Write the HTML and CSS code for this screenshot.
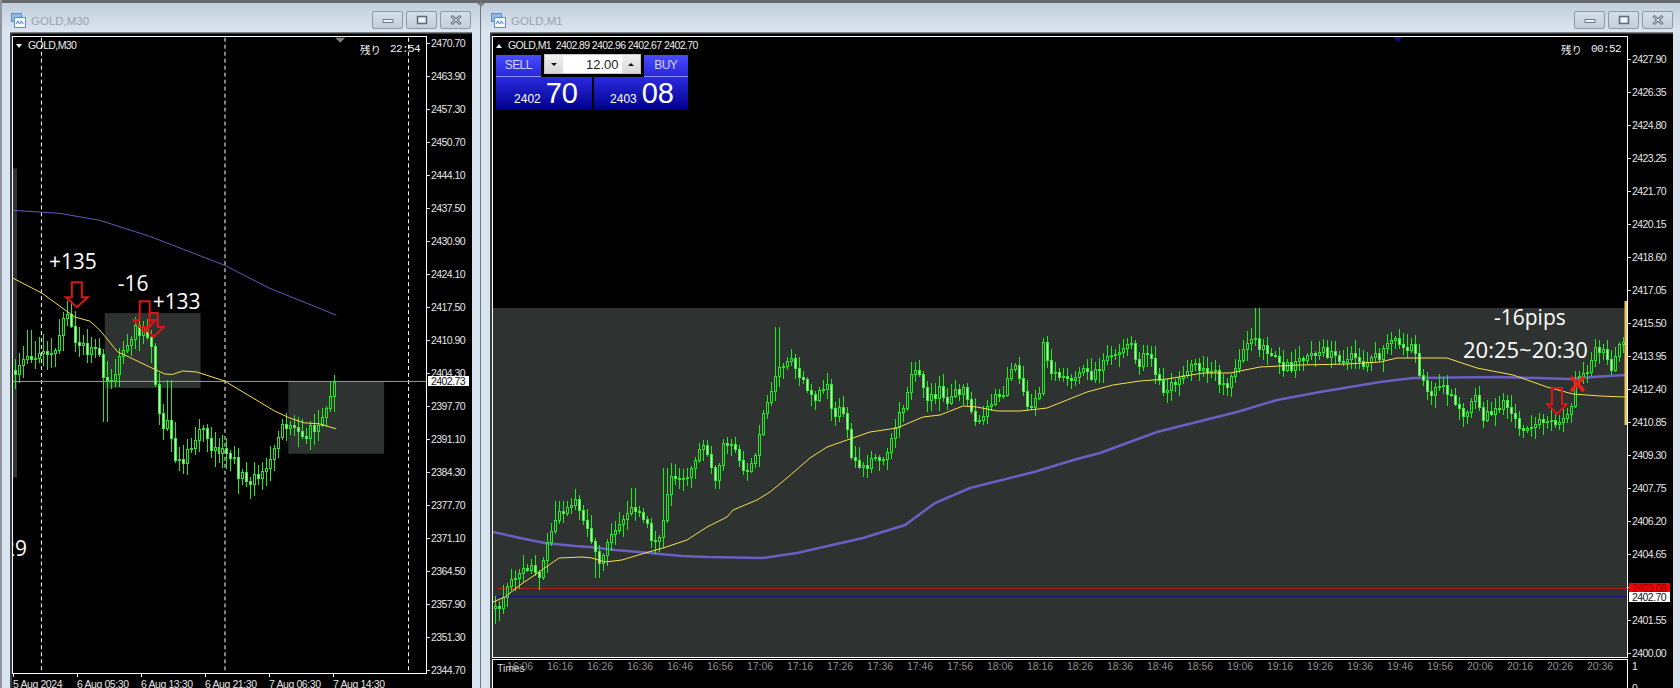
FILE: index.html
```html
<!DOCTYPE html>
<html lang="ja">
<head>
<meta charset="utf-8">
<title>GOLD charts</title>
<link rel="stylesheet" href="styles.css">
</head>
<body>
<section class="win win-left">
  <header class="title">
    <svg class="win-icon" viewBox="0 0 15 15"><rect x="0.5" y="0.5" width="10" height="8" fill="#8db8e4" stroke="#5c8fc6"/><rect x="3.5" y="4.5" width="11" height="10" fill="#f4f8fc" stroke="#5c8fc6"/><path d="M5 11l2-3 1.500 3 2-3 1.500 3" fill="none" stroke="#4a7fb8"/></svg>
    <span class="title-text">GOLD,M30</span>
    <div class="btns">
      <button class="btn"><svg viewBox="0 0 12 8"><rect x="1" y="3.500" width="10" height="3" fill="#eef2f6" stroke="#6e7b88"/></svg></button>
      <button class="btn"><svg viewBox="0 0 12 10"><rect x="1.500" y="1.500" width="9" height="7" fill="#e6ecf2" stroke="#5e6b78" stroke-width="1.500"/><rect x="4" y="4" width="4" height="2" fill="#fff"/></svg></button>
      <button class="btn"><svg viewBox="0 0 12 10"><path d="M1.500 1L10.500 9M10.500 1L1.500 9" stroke="#5e6b78" stroke-width="3"/><path d="M2 1.500L10 8.500M10 1.500L2 8.500" stroke="#f2f5f8" stroke-width="1"/></svg></button>
    </div>
  </header>
  <div class="client">
    <div class="plot-col">
      <div class="chart">
        <svg class="canvas" viewBox="13 37 414 636">
          <rect class="zone" x="13" y="168" width="4" height="310"/>
          <rect class="zone" x="105" y="313" width="96" height="75"/>
          <rect class="zone" x="289" y="382" width="96" height="72"/>
          <path class="dash" d="M41.500 37V673M225.500 37V673M409.500 37V673"/>
          <path class="price-line" d="M13 381.500H427"/>
          <polygon class="nav-gray" points="336,37 346,37 341,42"/>
          <polyline class="ma-thin-blue" points="13,210 60,213 100,220 150,236 225,265 270,288 337,315"/>
          <g id="candles-left"></g>
          <polyline class="ma-yellow" points="13,278 42,293 75,317 90,321 100,330 118,352 125,355 150,367 165,374 173,374.500 183,371 197,372 225,381 260,402 275,411 290,418 305,423 320,424 337,429"/>
          <path class="arrow" d="M72 282H82V297H88L77 307L66 297H72Z"/>
          <path class="arrow" d="M140 301H150V320H156L145 332L134 320H140Z"/>
          <path class="arrow" d="M150 313H158V327H164L154 337L144 327H150Z"/>
          <text class="note" x="49" y="269">+135</text>
          <text class="note" x="118" y="291">-16</text>
          <text class="note" x="153" y="309">+133</text>
          <text class="note" x="3" y="557">29</text>
        </svg>
        <div class="chart-head"><i class="tri tri-down"></i><span>GOLD,M30</span></div>
        <div class="remain"><span class="remain-jp">残り</span><span class="remain-time">22:54</span></div>
      </div>
      <div class="time-axis time-left">
        <span>5 Aug 2024</span><span>6 Aug 05:30</span><span>6 Aug 13:30</span><span>6 Aug 21:30</span><span>7 Aug 06:30</span><span>7 Aug 14:30</span>
      </div>
    </div>
    <div class="axis axis-left">
      <span>2470.70</span><span>2463.90</span><span>2457.30</span><span>2450.70</span><span>2444.10</span><span>2437.50</span><span>2430.90</span><span>2424.10</span><span>2417.50</span><span>2410.90</span><span>2404.30</span><span>2397.70</span><span>2391.10</span><span>2384.30</span><span>2377.70</span><span>2371.10</span><span>2364.50</span><span>2357.90</span><span>2351.30</span><span>2344.70</span>
      <b class="tag tag-white tag-left">2402.73</b>
    </div>
  </div>
</section>

<section class="win win-right">
  <header class="title">
    <svg class="win-icon" viewBox="0 0 15 15"><rect x="0.5" y="0.5" width="10" height="8" fill="#8db8e4" stroke="#5c8fc6"/><rect x="3.5" y="4.5" width="11" height="10" fill="#f4f8fc" stroke="#5c8fc6"/><path d="M5 11l2-3 1.500 3 2-3 1.500 3" fill="none" stroke="#4a7fb8"/></svg>
    <span class="title-text">GOLD,M1</span>
    <div class="btns">
      <button class="btn"><svg viewBox="0 0 12 8"><rect x="1" y="3.500" width="10" height="3" fill="#eef2f6" stroke="#6e7b88"/></svg></button>
      <button class="btn"><svg viewBox="0 0 12 10"><rect x="1.500" y="1.500" width="9" height="7" fill="#e6ecf2" stroke="#5e6b78" stroke-width="1.500"/><rect x="4" y="4" width="4" height="2" fill="#fff"/></svg></button>
      <button class="btn"><svg viewBox="0 0 12 10"><path d="M1.500 1L10.500 9M10.500 1L1.500 9" stroke="#5e6b78" stroke-width="3"/><path d="M2 1.500L10 8.500M10 1.500L2 8.500" stroke="#f2f5f8" stroke-width="1"/></svg></button>
    </div>
  </header>
  <div class="client">
    <div class="plot-col">
      <div class="chart">
        <svg class="canvas" viewBox="493 37 1134 620">
          <rect class="zone" x="493" y="308" width="1134" height="349"/>
          <polygon class="nav-blue" points="1393,37 1403,37 1398,42"/>
          <path class="level-red" d="M497 588.500H1627"/>
          <path class="level-blue" d="M497 596.500H1627"/>
          <polyline class="ma-thick-blue" points="493,532 520,538 545,543 575,546 590,547 615,550 639,552 682,556 707,557 763,558 797,553 863,538 905,525 935,503 970,488 1034,472 1077,459 1100,453 1157,432 1237,412 1277,400 1320,392 1380,382 1413,378 1497,377 1537,378 1570,379 1593,377 1625,375"/>
          <g id="candles-right"></g>
          <polyline class="ma-yellow" points="493,602 505,597 520,585 542,570 559,558 582,557 592,558 605,562 622,560 645,553 663,548 687,540 707,527 727,517 733,510 757,500 770,492 787,478 810,458 827,447 847,440 870,432 897,428 923,417 940,415 963,406 977,407 997,411 1020,411 1047,408 1087,392 1113,385 1140,381 1167,379 1203,373 1230,373 1260,367 1300,365 1347,364 1380,362 1397,358 1447,358 1477,368 1513,375 1547,387 1573,394 1600,396 1625,397"/>
          <path class="arrow" d="M1552 388H1562V404H1567L1557 414L1547 404H1552Z"/>
          <path class="cross" d="M1571 377Q1578 384 1584 391M1584 377Q1577 384 1571 391"/>
          <path class="bar-yellow" d="M1626 301V425"/>
          <text class="note" x="1494" y="325">-16pips</text>
          <text class="note note-wide" x="1463" y="358">20:25~20:30</text>
        </svg>
        <div class="chart-head"><i class="tri tri-up"></i><span>GOLD,M1&nbsp; 2402.89 2402.96 2402.67 2402.70</span></div>
        <div class="remain"><span class="remain-jp">残り</span><span class="remain-time">00:52</span></div>
        <div class="trade">
          <div class="trade-top">
            <div class="side"><span>SELL</span></div>
            <div class="spin"><i class="spin-btn"><i class="tri-sm tri-sm-down"></i></i><span class="spin-val">12.00</span><i class="spin-btn"><i class="tri-sm tri-sm-up"></i></i></div>
            <div class="side"><span>BUY</span></div>
          </div>
          <div class="trade-bottom">
            <div class="quote quote-sell"><small>2402</small><strong>70</strong></div>
            <div class="quote quote-buy"><small>2403</small><strong>08</strong></div>
          </div>
        </div>
      </div>
      <div class="sub">
        <span class="sub-name">Times</span>
        <span>16:06</span><span>16:16</span><span>16:26</span><span>16:36</span><span>16:46</span><span>16:56</span><span>17:06</span><span>17:16</span><span>17:26</span><span>17:36</span><span>17:46</span><span>17:56</span><span>18:06</span><span>18:16</span><span>18:26</span><span>18:36</span><span>18:46</span><span>18:56</span><span>19:06</span><span>19:16</span><span>19:26</span><span>19:36</span><span>19:46</span><span>19:56</span><span>20:06</span><span>20:16</span><span>20:26</span><span>20:36</span>
      </div>
    </div>
    <div class="axis axis-right">
      <span>2427.90</span><span>2426.35</span><span>2424.80</span><span>2423.25</span><span>2421.70</span><span>2420.15</span><span>2418.60</span><span>2417.05</span><span>2415.50</span><span>2413.95</span><span>2412.40</span><span>2410.85</span><span>2409.30</span><span>2407.75</span><span>2406.20</span><span>2404.65</span><span>2403.10</span><span>2401.55</span><span>2400.00</span>
      <b class="tag tag-red">2403.08</b>
      <b class="tag tag-white tag-right">2402.70</b>
      <em class="sub-scale sub-scale-top">1</em>
      <em class="sub-scale sub-scale-bottom">0</em>
    </div>
  </div>
</section>
<script src="script.js"></script>
</body>
</html>
```

FILE: styles.css
```css
* { box-sizing: border-box; }
html, body { margin: 0; height: 688px; overflow: hidden; }
body {
  display: flex;
  background: #d8e3ef;
  font-family: "Liberation Sans", Arial, sans-serif;
}
.win {
  display: flex;
  flex-direction: column;
  height: 688px;
  background: #d8e4f0;
}
.win-left {
  width: 481px;
  padding-left: 8px;
  padding-right: 8px;
  border-left: 2px solid #8f959b;
  border-right: 1px solid #6f767d;
}
.win-right {
  position: relative;
  flex: 1;
  padding-left: 9px;
  padding-right: 7px;
}
.win-right::before {
  content: "";
  position: absolute;
  top: 3px;
  left: -4px;
  width: 0;
  height: 0;
  border-left: 4px solid transparent;
  border-right: 4px solid transparent;
  border-top: 4px solid #7d8287;
}
.title {
  flex: none;
  display: flex;
  align-items: flex-start;
  height: 33px;
  margin: 0 -9px 0 -9px;
  padding: 10px 9px 0 10px;
  border-top: 3px solid #65696d;
  background: linear-gradient(#c2ced9, #dbe6f2);
}
.win-left .title { margin: 0 -8px; padding-left: 9px; }
.win-right .title { margin: 0 -7px 0 -9px; padding-right: 7px; }
.win-icon { width: 15px; height: 15px; }
.title-text {
  margin-left: 5px;
  font-size: 11.500px;
  line-height: 16px;
  color: #98a2ac;
}
.btns { display: flex; gap: 3px; margin-left: auto; margin-top: -2px; }
.btn {
  display: flex;
  align-items: center;
  justify-content: center;
  width: 31px;
  height: 18px;
  padding: 0;
  border: 1px solid #8c9aa8;
  border-radius: 2px;
  background: linear-gradient(#d5dfe9, #c2cedb);
}
.btn svg { width: 12px; height: 10px; }
.client {
  flex: 1;
  display: flex;
  min-height: 0;
  padding: 3px 0 0 2px;
  background: #000;
  box-shadow: inset 2px 1px 0 #3a3d40, 0 -1px 0 #7a7f84;
}
.plot-col { display: flex; flex-direction: column; flex: 1; min-width: 0; }
.chart {
  position: relative;
  flex: 1;
  min-height: 0;
  border: 1px solid #fff;
  background: #000;
}
.canvas { display: block; width: 100%; height: 100%; }
.zone { fill: #2e3230; }
.dash { stroke: #fff; stroke-width: 1; stroke-dasharray: 4 3; fill: none; }
.price-line { stroke: #9b9e9e; stroke-width: 1; }
.nav-gray { fill: #808080; }
.nav-blue { fill: #10108c; }
.ma-thin-blue { fill: none; stroke: #5f5bbc; stroke-width: 1; }
.ma-thick-blue { fill: none; stroke: #6a60c4; stroke-width: 2.500; }
.ma-yellow { fill: none; stroke: #f5e050; stroke-width: 1; }
.level-red { stroke: #b41c1c; stroke-width: 1; }
.level-blue { stroke: #12127e; stroke-width: 1; }
.wick { stroke: #22ea22; stroke-width: 1; shape-rendering: crispEdges; }
.body-up { fill: none; stroke: #22ea22; stroke-width: 1; shape-rendering: crispEdges; }
.body-down { fill: #ccfcc8; stroke: #34f034; stroke-width: 1; shape-rendering: crispEdges; }
.arrow { fill: none; stroke: #dc1414; stroke-width: 2; }
.cross { fill: none; stroke: #f01c1c; stroke-width: 3.500; }
.bar-yellow { stroke: #f0c850; stroke-width: 3; }
.note {
  font-family: "Open Sans", "Liberation Sans", sans-serif;
  font-size: 21px;
  fill: #fff;
}
.note-wide { font-size: 22px; }
.chart-head {
  position: absolute;
  top: 2px;
  left: 3px;
  display: flex;
  align-items: center;
  gap: 6px;
  font-size: 10.500px;
  line-height: 13px;
  letter-spacing: -0.6px;
  color: #eee;
}
.tri { display: block; width: 0; height: 0; border-left: 3.500px solid transparent; border-right: 3.500px solid transparent; }
.tri-down { border-top: 4px solid #eee; }
.tri-up { border-bottom: 4px solid #eee; }
.remain {
  position: absolute;
  top: 6px;
  right: 6px;
  display: flex;
  align-items: center;
  gap: 9px;
  color: #f0f0f0;
  line-height: 13px;
}
.remain-jp { font-family: "Noto Sans CJK JP", sans-serif; font-size: 10.500px; }
.remain-time { font-family: "Liberation Mono", monospace; font-size: 11px; letter-spacing: -0.6px; }
.time-axis { flex: none; display: flex; height: 14px; font-size: 10.500px; line-height: 14px; letter-spacing: -0.4px; }
.time-left span {
  position: relative;
  flex: none;
  width: 64px;
  padding: 3px 0 0 1px;
  color: #e4e4e4;
  white-space: nowrap;
}
.time-left span::before {
  content: "";
  position: absolute;
  top: 0;
  left: 1px;
  width: 1px;
  height: 3px;
  background: #fff;
}
.axis {
  position: relative;
  flex: none;
  display: flex;
  flex-direction: column;
  width: 45px;
  font-size: 10.500px;
  line-height: 14px;
  letter-spacing: -0.55px;
  color: #e6e6e6;
  overflow: hidden;
}
.axis span {
  position: relative;
  flex: none;
  padding-left: 4px;
}
.axis span::before {
  content: "";
  position: absolute;
  left: 0;
  top: 7px;
  width: 3px;
  height: 1px;
  background: #ddd;
}
.axis-left { row-gap: 19px; }
.axis-right { row-gap: 19px; padding-top: 16px; }
.tag {
  position: absolute;
  left: 1px;
  width: 41px;
  height: 10px;
  padding-left: 3px;
  font-weight: 400;
  line-height: 10px;
  overflow: hidden;
}
.tag-white { background: #fff; color: #111; }
.tag-left { top: 340px; }
.tag-right { top: 556px; }
.tag-red { top: 547px; height: 9px; background: #f00; color: #800000; }
.sub-scale { position: absolute; left: 4px; font-style: normal; }
.sub-scale-top { top: 623px; }
.sub-scale-bottom { top: 645px; }
.sub {
  position: relative;
  flex: none;
  display: flex;
  height: 29px;
  margin-top: 1px;
  padding: 0 0 0 7px;
  border: 1px solid #fff;
  border-bottom: 0;
  font-size: 10.500px;
  line-height: 13px;
  color: #8e8e8e;
  letter-spacing: -0.1px;
}
.sub span { flex: none; width: 40px; text-align: center; }
.sub .sub-name {
  position: absolute;
  top: 2px;
  left: 4px;
  width: auto;
  color: #d8d8d8;
}
.trade {
  position: absolute;
  top: 18px;
  left: 3px;
  display: flex;
  flex-direction: column;
  width: 192px;
}
.trade-top { display: flex; gap: 3px; height: 22px; }
.side {
  flex: 1;
  display: flex;
  align-items: center;
  justify-content: center;
  padding-bottom: 1px;
  background: linear-gradient(#4a4aff, #2828d8);
  border-bottom: 1px solid #8f8fff;
  color: #d4d4ff;
  font-size: 12px;
  letter-spacing: -0.6px;
}
.spin {
  flex: none;
  display: flex;
  width: 97px;
  height: 20px;
  margin-top: -1px;
  background: #fff;
  border: 1px solid #c8c8c8;
}
.spin-btn {
  flex: none;
  display: flex;
  align-items: center;
  justify-content: center;
  width: 18px;
  background: linear-gradient(#f0f0f0, #d8d8d8);
}
.spin-val { flex: 1; padding: 1px 3px 0 0; text-align: right; font-size: 13px; line-height: 17px; color: #222; }
.tri-sm { display: block; width: 0; height: 0; border-left: 3px solid transparent; border-right: 3px solid transparent; }
.tri-sm-down { border-top: 3px solid #111; }
.tri-sm-up { border-bottom: 3px solid #111; }
.trade-bottom { display: flex; gap: 2px; height: 33px; }
.quote {
  display: flex;
  align-items: baseline;
  justify-content: flex-end;
  gap: 5px;
  padding-right: 14px;
  background: linear-gradient(#2a2ae0, #00008c);
  color: #fff;
}
.quote-sell { width: 96px; }
.quote-buy { width: 94px; }
.quote small { font-size: 12px; }
.quote strong { font-size: 29px; line-height: 33px; font-weight: 400; }
```

FILE: script.js
```js
var SVG_NS = "http://www.w3.org/2000/svg";

var RIGHT_MID = [
  493,600, 497,610, 505,590, 517,570, 530,568, 540,572, 550,533, 557,517, 565,512, 572,500, 580,507, 590,537,
  598,563, 605,548, 613,530, 627,510, 637,513, 650,533, 657,550, 665,507, 670,480, 683,483, 693,468, 702,447,
  710,465, 715,477, 722,447, 733,440, 738,460, 743,473, 757,450, 763,417, 770,393, 778,363, 790,358, 802,380,
  813,398, 827,387, 832,413, 842,407, 847,433, 850,460, 867,463, 877,450, 882,465, 887,447, 897,420, 905,403,
  910,377, 917,365, 922,378, 927,397, 940,390, 948,403, 953,390, 965,393, 973,415, 980,427, 990,403, 997,393,
  1002,400, 1007,373, 1017,368, 1022,393, 1030,407, 1038,400, 1043,347, 1050,368, 1067,378, 1080,372, 1093,377,
  1107,353, 1120,357, 1130,337, 1138,365, 1148,350, 1157,377, 1162,390, 1173,380, 1190,368, 1210,370, 1227,387,
  1233,373, 1240,353, 1253,337, 1268,353, 1282,365, 1290,368, 1297,360, 1310,357, 1322,347, 1333,357, 1342,362,
  1352,350, 1357,363, 1373,357, 1383,353, 1387,340, 1393,332, 1402,348, 1413,347, 1417,367, 1423,383, 1433,392,
  1442,385, 1450,393, 1462,413, 1470,407, 1477,397, 1483,418, 1490,413, 1497,403, 1507,407, 1517,420, 1523,427,
  1533,430, 1547,417, 1553,420, 1563,418, 1570,407, 1577,377, 1588,370, 1593,350, 1602,350, 1607,363, 1613,367,
  1622,340, 1627,347
];

var LEFT_MID = [
  13,367, 22,368, 27,353, 33,357, 38,347, 45,347, 53,363, 58,343, 62,317, 68,317, 72,333, 78,348, 85,348, 90,347,
  97,348, 102,377, 108,377, 115,377, 118,350, 125,343, 130,333, 137,328, 142,330, 147,337, 150,337, 153,360,
  157,407, 162,423, 168,423, 173,450, 178,460, 185,457, 190,447, 197,437, 202,427, 208,437, 213,450, 218,455,
  225,448, 233,457, 238,473, 248,477, 253,483, 262,470, 273,453, 277,433, 285,427, 293,417, 302,443, 305,443,
  310,430, 317,428, 322,423, 328,410, 333,393, 337,383
];

var seed = 20240807;
function rnd() {
  seed = (seed * 1664525 + 1013904223) % 4294967296;
  return seed / 4294967296;
}

function interp(points, x) {
  for (var i = 0; i + 3 < points.length; i += 2) {
    if (x <= points[i + 2]) {
      var t = (x - points[i]) / (points[i + 2] - points[i]);
      return points[i + 1] + (points[i + 3] - points[i + 1]) * Math.max(0, Math.min(1, t));
    }
  }
  return points[points.length - 1];
}

function add(parent, name, attrs) {
  var el = document.createElementNS(SVG_NS, name);
  for (var key in attrs) el.setAttribute(key, attrs[key]);
  parent.appendChild(el);
}

function draw(id, points, x0, count, wickSize, noise, spikes) {
  var group = document.getElementById(id);
  var prev = interp(points, x0) + 3;
  for (var i = 0; i < count; i++) {
    var x = x0 + i * 4;
    var close = Math.round(interp(points, x) + (rnd() - 0.5) * noise);
    var open = Math.round(prev);
    if (close === open) close -= 1;
    var top = Math.min(open, close);
    var bottom = Math.max(open, close);
    var r1 = rnd(), r2 = rnd();
    var high = top - Math.round(2 + r1 * wickSize);
    var low = bottom + Math.round(2 + r2 * wickSize);
    for (var s = 0; s < spikes.length; s++) {
      if (Math.abs(spikes[s][0] - x) <= 2) {
        if (spikes[s][1] !== null) high = spikes[s][1];
        if (spikes[s][2] !== null) low = spikes[s][2];
      }
    }
    var px = x + 0.5;
    add(group, "path", { "class": "wick", d: "M" + px + " " + high + "V" + top + "M" + px + " " + bottom + "V" + low });
    add(group, "rect", {
      "class": close < open ? "body-up" : "body-down",
      x: px - 1, y: top + 0.5, width: 2, height: bottom - top
    });
    prev = close;
  }
}

draw("candles-right", RIGHT_MID, 495, 283, 11, 11, [
  [1257, 308, null], [777, 327, null], [665, 468, null], [557, 501, null], [633, 488, null], [597, null, 578], [495, null, 624]
]);
draw("candles-left", LEFT_MID, 15, 81, 15, 14, [
  [335, 375, null], [105, null, 422], [169, 380, null], [250, null, 499], [29, 330, null]
]);
```
